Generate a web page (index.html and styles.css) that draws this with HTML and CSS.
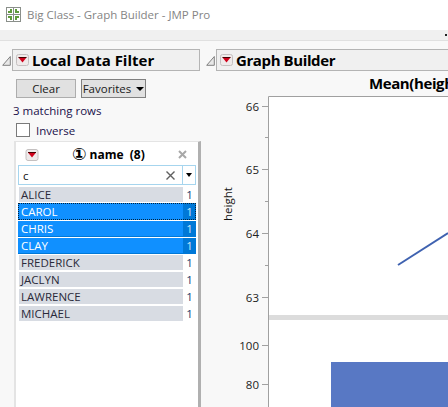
FILE: index.html
```html
<!DOCTYPE html>
<html lang="en">
<head>
<meta charset="utf-8">
<title>Big Class - Graph Builder - JMP Pro</title>
<link rel="stylesheet" href="styles.css">
</head>
<body>
<svg class="defs" width="0" height="0" aria-hidden="true">
  <symbol id="red-btn" viewBox="0 0 13 12">
    <rect x="0.5" y="0.5" width="12" height="11" rx="2" fill="#efeaea" stroke="#c4c0c0"/>
    <path d="M2.500 3.500h8L6.500 8.500z" fill="#d0021b"/>
    <path d="M2.500 3.500h8" stroke="#400" stroke-width="1"/>
  </symbol>
  <symbol id="disclose" viewBox="0 0 9 11">
    <path d="M0.7 10.3H8.300V1.500Z" fill="#e8e8e8" stroke="#808080"/>
  </symbol>
</svg>
<header class="titlebar">
  <svg class="app-icon" width="15" height="15" viewBox="0 0 15 15">
    <rect x="0.500" y="0.500" width="14" height="14" fill="#fff" stroke="#8a8f8a"/>
    <path d="M7.500 0.500v14M0.500 7.500h14" stroke="#8a8f8a"/>
    <path d="M2 4h2V2h2v4H2zM9 2h2v2h2v2H9zM2 9h4v4H4v-2H2zM9 9h4v2h-2v2H9z" fill="#5f9a3c"/>
  </svg>
  <span class="window-title">Big Class - Graph Builder - JMP Pro</span>
</header>
<div class="toolbar"><span class="tool-dot"></span></div>
<main class="content">
  <section class="filter">
    <div class="outline">
      <svg class="disclose"><use href="#disclose"/></svg>
      <div class="outline-head">
        <svg class="red-btn"><use href="#red-btn"/></svg>
        <span class="outline-title">Local Data Filter</span>
      </div>
    </div>
    <div class="actions">
      <button class="btn clear">Clear</button>
      <button class="btn favorites">Favorites <span class="caret"></span></button>
    </div>
    <div class="matching">3 matching rows</div>
    <label class="inverse"><span class="check"></span>Inverse</label>
    <div class="list-panel">
      <div class="list-head">
        <svg class="red-btn"><use href="#red-btn"/></svg>
        <span class="col-name"><span class="one">①</span> name&nbsp; (8)</span>
        <svg class="close" width="9" height="9" viewBox="0 0 9 9"><path d="M1 1l7 7M8 1l-7 7" stroke="#a8a8a8" stroke-width="2"/></svg>
      </div>
      <div class="search">
        <span class="search-text">c</span>
        <svg class="search-x" width="9" height="9" viewBox="0 0 9 9"><path d="M0.500 0.500l8 8M8.500 0.500l-8 8" stroke="#606060" stroke-width="1.400"/></svg>
        <span class="search-drop"><span class="caret"></span></span>
      </div>
      <ul class="rows">
        <li class="row"><span class="row-name">ALICE</span><span class="row-count">1</span></li>
        <li class="row selected focus"><span class="row-name">CAROL</span><span class="row-count">1</span></li>
        <li class="row selected"><span class="row-name">CHRIS</span><span class="row-count">1</span></li>
        <li class="row selected"><span class="row-name">CLAY</span><span class="row-count">1</span></li>
        <li class="row"><span class="row-name">FREDERICK</span><span class="row-count">1</span></li>
        <li class="row"><span class="row-name">JACLYN</span><span class="row-count">1</span></li>
        <li class="row"><span class="row-name">LAWRENCE</span><span class="row-count">1</span></li>
        <li class="row"><span class="row-name">MICHAEL</span><span class="row-count">1</span></li>
      </ul>
    </div>
  </section>
  <section class="builder">
    <div class="outline">
      <svg class="disclose"><use href="#disclose"/></svg>
      <div class="outline-head">
        <svg class="red-btn"><use href="#red-btn"/></svg>
        <span class="outline-title narrow">Graph Builder</span>
      </div>
    </div>
    <div class="graph-title">Mean(height)</div>
    <svg class="graph" width="244" height="311" viewBox="204 96 244 311">
      <rect x="268" y="96" width="180" height="219" fill="#fff"/>
      <rect x="268" y="320" width="180" height="87" fill="#fff"/>
      <rect x="268" y="315" width="180" height="5" fill="#dcdcdc"/>
      <rect x="331" y="362" width="117" height="45" fill="#5878c4"/>
      <path d="M398 265L448 233" stroke="#3f62b0" stroke-width="2" fill="none"/>
      <path d="M268.500 407V96.500H448" stroke="#a0a0a0" fill="none"/>
      <path d="M262 106.500h6M262 169.500h6M262 233.500h6M262 297.500h6M262 345.500h6M262 384.500h6M265 137.500h3M265 201.500h3M265 265.500h3" stroke="#a0a0a0"/>
      <g class="tick-labels">
        <text x="259" y="110.500">66</text>
        <text x="259" y="173.500">65</text>
        <text x="259" y="237.500">64</text>
        <text x="259" y="301.500">63</text>
        <text x="259" y="349.500">100</text>
        <text x="259" y="388.500">80</text>
      </g>
      <text class="axis-title" transform="translate(232 221) rotate(-90)">height</text>
    </svg>
  </section>
</main>
</body>
</html>
```
FILE: styles.css
```css
* { box-sizing: border-box; }
html, body { margin: 0; padding: 0; }
body {
  width: 448px;
  height: 407px;
  overflow: hidden;
  background: #f8f8f8;
  font-family: "Open Sans", "Noto Sans", sans-serif;
  font-size: 11.5px;
  color: #1a1a1a;
}
.defs { position: absolute; }
.titlebar {
  height: 30px;
  background: #fff;
  display: flex;
  align-items: center;
  padding: 0 0 1px 6px;
  gap: 6px;
}
.window-title { color: #858585; font-size: 11.5px; white-space: nowrap; }
.toolbar {
  height: 11px;
  background: #f0f0f0;
  border-bottom: 1px solid #e0e0e0;
  position: relative;
}
.tool-dot {
  position: absolute;
  left: 445px;
  top: 4px;
  width: 2px;
  height: 2px;
  background: #222;
}
.content { display: flex; height: 366px; }
.filter { width: 201px; flex: none; display: flex; flex-direction: column; padding-top: 8px; }
.builder { flex: 1; min-width: 0; padding: 8px 0 0 3px; display: flex; flex-direction: column; overflow: hidden; }
.outline { display: flex; align-items: flex-end; gap: 1px; padding-left: 2px; height: 22px; flex: none; }
.filter .outline { margin-right: 1px; }
.builder .outline { margin-right: -2px; }
.disclose { width: 9px; height: 11px; flex: none; margin-bottom: 5px; }
.outline-head {
  flex: 1;
  height: 22px;
  background: #f0f0f0;
  border: 1px solid #b4b4b4;
  display: flex;
  align-items: center;
  padding-left: 3px;
  gap: 3px;
}
.red-btn { width: 13px; height: 12px; flex: none; }
.outline-title { font-size: 15px; font-weight: 700; color: #000; white-space: nowrap; }
.outline-title.narrow { letter-spacing: -0.4px; }
.actions { display: flex; gap: 5px; padding: 8px 0 0 16px; }
.btn {
  height: 19px;
  padding: 0;
  font: inherit;
  color: #1a1a1a;
  background: #e1e1e1;
  border: 1px solid #adadad;
  display: flex;
  align-items: center;
  justify-content: center;
}
.clear { width: 60px; }
.favorites { width: 65px; gap: 5px; border-color: #808080; }
.caret {
  display: inline-block;
  width: 0;
  height: 0;
  border-left: 4px solid transparent;
  border-right: 4px solid transparent;
  border-top: 4px solid #000;
}
.matching { padding: 4px 0 0 13px; height: 22px; color: #20104a; line-height: 17px; white-space: nowrap; }
.inverse { display: flex; align-items: center; gap: 6px; padding-left: 16px; height: 18px; margin: 1px 0 2px; color: #20104a; }
.check { width: 14px; height: 14px; background: #fff; border: 1px solid #7a7a7a; flex: none; }
.list-panel {
  margin: 0 0 0 14px;
  flex: 1;
  background: #fff;
  border-top: 1px solid #e4e4e4;
  border-left: 2px solid #e4e4e4;
  border-right: 3px solid #b0b0b0;
  padding: 0 2px 0 2px;
}
.list-head { height: 23px; display: flex; align-items: center; padding: 2px 0 0 7px; position: relative; }
.list-head .red-btn { width: 14px; }
.col-name { font-weight: 700; font-size: 12px; color: #000; position: absolute; left: 54px; white-space: nowrap; }
.one { font-family: "DejaVu Sans", sans-serif; font-size: 17px; font-weight: 700; line-height: 1; vertical-align: -1px; }
.close { position: absolute; right: 9px; top: 8px; }
.search {
  height: 20px;
  border: 1px solid #a6d5ee;
  display: flex;
  align-items: center;
  background: #fff;
}
.search-text { flex: 1; padding-left: 4px; color: #111; }
.search-x { margin-right: 7px; }
.search-drop { width: 13px; height: 100%; border-left: 1px solid #a6d5ee; display: flex; align-items: center; justify-content: center; }
.search-drop .caret { border-left-width: 3.5px; border-right-width: 3.5px; }
.rows { list-style: none; margin: 2px 0 0; padding: 0; display: flex; flex-direction: column; gap: 2px; }
.row { height: 15px; display: flex; line-height: 15px; color: #2a2a3a; }
.row-name { width: 164px; margin-left: 1px; padding-left: 2px; background: #d8dce3; flex: none; }
.row-count { width: 13px; text-align: center; color: #1a3a6a; flex: none; }
.row.selected { color: #fff; background: #1090ff; box-shadow: 0 1px 0 #0078d7; }
.row.selected .row-name { background: transparent; margin-left: 0; padding-left: 3px; width: 165px; }
.row.selected .row-count { background: #0078d7; color: #cfe6fa; }
.row.focus { height: 17px; margin: -1px 0 -1px; line-height: 17px; outline: 1px dotted #00233f; outline-offset: -1px; box-shadow: none; }
.graph-title { height: 25px; flex: none; font-size: 15px; font-weight: 700; color: #000; padding-left: 165px; line-height: 25px; white-space: nowrap; letter-spacing: -0.4px; }
.graph { display: block; flex: none; }
.tick-labels text { font-size: 11.5px; text-anchor: end; fill: #222; font-family: "Open Sans", "Noto Sans", sans-serif; }
.axis-title { font-size: 11.5px; fill: #111; font-family: "Open Sans", "Noto Sans", sans-serif; }
```
